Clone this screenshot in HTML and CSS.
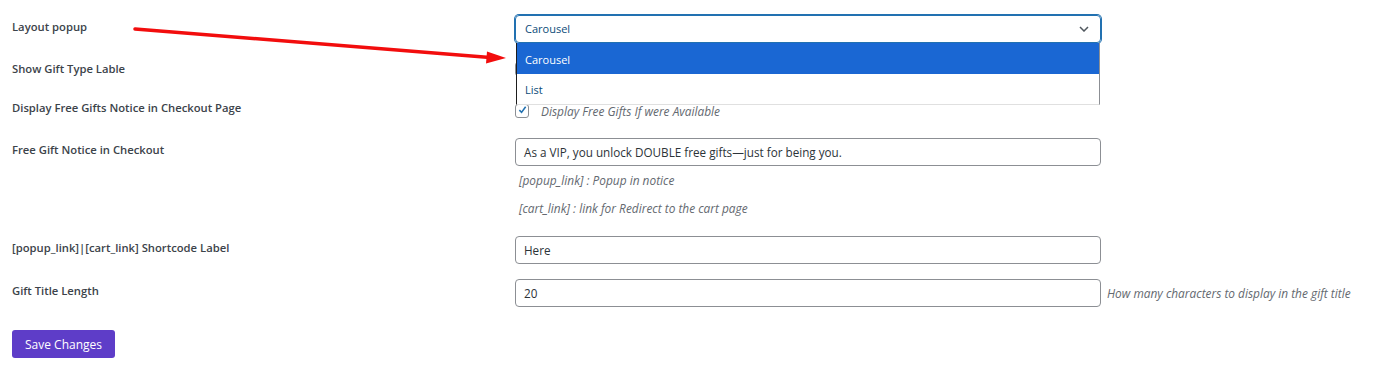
FILE: index.html
```html
<!DOCTYPE html>
<html>
<head>
<meta charset="utf-8">
<link rel="stylesheet" href="styles.css">
</head>
<body>
<div class="page">
  <div class="row row-select">
    <div class="label">Layout popup</div>
    <div class="field">
      <div class="select">
        <span>Carousel</span>
        <svg class="chev" width="10" height="6" viewBox="0 0 10 6"><path d="M1 1 L5 5 L9 1" fill="none" stroke="#50575e" stroke-width="1.5"/></svg>
      </div>
    </div>
  </div>
  <div class="row row-check2">
    <div class="label label-check">Show Gift Type Lable</div>
    <div class="field"><span class="checkbox"></span></div>
  </div>
  <div class="row row-check3">
    <div class="label label-check3">Display Free Gifts Notice in Checkout Page</div>
    <div class="field check-field">
      <span class="checkbox checked"><svg width="14" height="14" viewBox="0 0 14 14"><path d="M3 7.2 L5.8 10 L11 2.8" fill="none" stroke="#2271b1" stroke-width="2"/></svg></span>
      <span class="desc">Display Free Gifts If were Available</span>
    </div>
  </div>
  <div class="row row-notice">
    <div class="label">Free Gift Notice in Checkout</div>
    <div class="field">
      <div class="input">As a VIP, you unlock DOUBLE free gifts—just for being you.</div>
      <p class="desc note">[popup_link] : Popup in notice</p>
      <p class="desc note">[cart_link] : link for Redirect to the cart page</p>
    </div>
  </div>
  <div class="row row-short">
    <div class="label">[popup_link]|[cart_link] Shortcode Label</div>
    <div class="field"><div class="input">Here</div></div>
  </div>
  <div class="row row-len">
    <div class="label">Gift Title Length</div>
    <div class="field inline">
      <div class="input">20</div>
      <span class="desc side">How many characters to display in the gift title</span>
    </div>
  </div>
  <button class="save">Save Changes</button>

  <div class="dropdown">
    <div class="opt active">Carousel</div>
    <div class="opt">List</div>
  </div>
  <svg class="arrow" width="1377" height="120" viewBox="0 0 1377 120">
    <line x1="135" y1="29" x2="490" y2="57.5" stroke="#f20d0d" stroke-width="3.5" stroke-linecap="round"/>
    <polygon points="487,51.5 506,58 486,63.5" fill="#f20d0d"/>
  </svg>
</div>
</body>
</html>
```
FILE: styles.css
```css
html, body {
  margin: 0;
  padding: 0;
  background: #ffffff;
}
body {
  font-family: "Open Sans", "Noto Sans", sans-serif;
  font-size: 11px;
  color: #1d2327;
}
.page {
  position: relative;
  padding: 15px 12px 0 12px;
  width: 1377px;
  height: 365px;
  box-sizing: border-box;
}
.row {
  display: flex;
  align-items: flex-start;
}
.label {
  width: 503px;
  flex: none;
  font-weight: 600;
  font-size: 11.25px;
  color: #3c434a;
  line-height: 18px;
  padding-top: 3px;
}
.label-check {
  padding-top: 0;
  margin-top: -2px;
}
.label-check3 {
  padding-top: 0;
  margin-top: -4px;
}
.field {
  display: flex;
  flex-direction: column;
}
.row-select { height: 47px; }
.row-check2 { height: 41px; }
.row-check3 { height: 35px; }
.row-notice { height: 98px; }
.row-short { height: 43px; }
.row-len { height: 51px; }

.select {
  box-sizing: border-box;
  width: 586px;
  height: 28px;
  border: 1px solid #2271b1;
  box-shadow: 0 0 0 1px #2271b1;
  border-radius: 4px;
  display: flex;
  align-items: center;
  justify-content: space-between;
  padding: 0 11px 0 9px;
  color: #0a4b78;
}
.select span { margin-top: -1px; }
.chev { display: block; }
.input {
  box-sizing: border-box;
  width: 586px;
  height: 28px;
  border: 1px solid #8c8f94;
  border-radius: 4px;
  display: flex;
  align-items: center;
  padding: 0 8px;
  color: #2c3338;
  font-size: 11.7px;
}
.checkbox {
  box-sizing: border-box;
  width: 14px;
  height: 14px;
  border: 1px solid #8c8f94;
  border-radius: 3px;
  display: flex;
  align-items: center;
  justify-content: center;
  background: #fff;
}
.checkbox svg { display: block; margin-top: -2px; margin-left: 1px; }
.check-field {
  flex-direction: row;
  align-items: center;
  gap: 12px;
}
.desc {
  font-style: italic;
  color: #646970;
  font-size: 11.9px;
}
.note {
  margin: 0;
  line-height: 18px;
  padding-left: 4px;
}
.note:first-of-type { margin-top: 5px; }
.note + .note { margin-top: 10px; }
.inline {
  flex-direction: row;
  align-items: center;
  gap: 6px;
}
.save {
  display: block;
  margin: 0;
  width: 103px;
  height: 28px;
  border: none;
  border-radius: 3px;
  background: #5e3dc8;
  color: #ffffff;
  font-family: "Open Sans", "Noto Sans", sans-serif;
  font-size: 12px;
  padding: 0;
}
.dropdown {
  position: absolute;
  left: 516px;
  top: 43px;
  width: 584px;
  box-sizing: border-box;
  border-left: 1px solid #1d1d1d;
  border-right: 1px solid #8c8f94;
  border-bottom: 1px solid #e0e0e0;
  background: #fff;
}
.opt {
  height: 30px;
  display: flex;
  align-items: center;
  padding-left: 8px;
  color: #0a4b78;
}
.opt.active {
  background: #1a67d3;
  color: #ffffff;
  height: 31px;
}
.opt.active { padding-top: 1px; box-sizing: border-box; }
.arrow {
  position: absolute;
  left: 0;
  top: 0;
  pointer-events: none;
}
```
